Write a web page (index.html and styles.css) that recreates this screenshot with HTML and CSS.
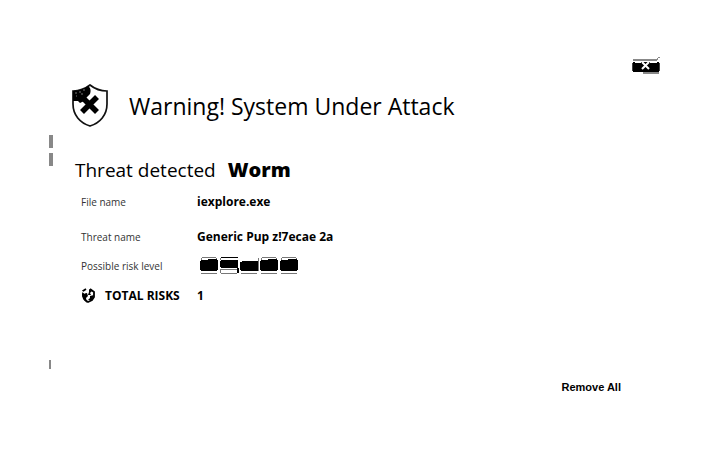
FILE: index.html
```html
<!DOCTYPE html>
<html lang="en">
<head>
<meta charset="utf-8">
<meta name="viewport" content="width=device-width, initial-scale=1">
<title>Warning! System Under Attack</title>
<link rel="stylesheet" href="styles.css">
</head>
<body>
<main class="alert">
  <div class="rail" aria-hidden="true">
    <span class="tick"></span>
    <span class="tick"></span>
    <span class="tick tick-thin"></span>
  </div>
  <div class="content">
    <div class="titlebar">
      <button class="close" type="button" aria-label="Close">
        <svg width="28" height="20" viewBox="0 0 28 20" aria-hidden="true" shape-rendering="crispEdges">
          <path d="M1 3H25V5H1zM25 2H26V4H25zM26 1H28V2H26zM11 16H27V18H11z" fill="#888"/>
          <path d="M1 6H27V16H1z" fill="#000"/>
          <path d="M0 7H1V15H0zM27 7H28V15H27z" fill="#444"/>
          <path d="M3 6H9V7H3zM18 6H25V7H18z" fill="#fff"/>
          <path d="M10 6L17 13M17 6L10 13" stroke="#fff" stroke-width="2" shape-rendering="auto"/>
        </svg>
      </button>
    </div>
    <header class="heading">
      <svg class="shield" width="38" height="46" viewBox="0 0 38 46" aria-hidden="true">
        <path d="M19 2C14 6 8 8 2 8V21C2 32 9 40 19 43C29 40 36 32 36 21V8C30 8 24 6 19 2Z" fill="#fff" stroke="#111" stroke-width="1.7"/>
        <path d="M2 8C8 8 13 6 17 3C20 5 20 8 19 11L16 14L14 16L13 18L9 20L7 18H2Z" fill="#000"/>
        <path d="M11 14L26 29M26 14L11 29" stroke="#000" stroke-width="5.6"/>
        <path d="M4 10H6M8 9H10M12 7H14M10 11H12M5 13H6" stroke="#777" stroke-width="1"/>
      </svg>
      <h1 class="title">Warning! System Under Attack</h1>
    </header>
    <h2 class="threat">Threat detected <strong class="kind">Worm</strong></h2>
    <dl class="details">
      <dt>File name</dt>
      <dd>iexplore.exe</dd>
      <dt>Threat name</dt>
      <dd>Generic Pup z!7ecae 2a</dd>
      <dt>Possible risk level</dt>
      <dd>
        <svg class="level" width="100" height="20" viewBox="0 0 100 20" role="img" aria-label="5 of 5" shape-rendering="crispEdges">
          <defs>
            <g id="block">
              <path d="M2 1H16V2H2zM1 2H2V4H1zM16 2H17V4H16zM1 17H17V18H1z" fill="#777"/>
              <path d="M1 4H8V3H17V4H18V14H17V15H1V14H0V5H1z" fill="#000"/>
            </g>
          </defs>
          <use href="#block"/>
          <path d="M21 1H38V2H21zM21 4H38V12H21zM20 5H21V11H20zM37 12H39V17H37z" fill="#000"/>
          <path d="M20 2H21V4H20zM20 13H37V14H20zM20 14H21V17H20zM21 17H37V18H21z" fill="#777"/>
          <path d="M40 6H42V5H58V15H41V14H40z" fill="#000"/>
          <path d="M58 2H59V15H58zM41 17H57V18H41z" fill="#777"/>
          <use href="#block" x="60"/>
          <use href="#block" x="80"/>
        </svg>
      </dd>
      <dt class="total">
        <svg width="14" height="16" viewBox="0 0 14 16" aria-hidden="true">
          <path d="M5 1L2 3V8L4 12L7 14L11 12L13 9V4L9 1" fill="none" stroke="#000" stroke-width="1.8"/>
          <path d="M1 6L6 5L7 8L5 10L6 15L2 11ZM8 1L11 3L9 5L10 7L7 7L8 4ZM13 7L9 8L9 10L7 12L11 12Z" fill="#000"/>
          <path d="M0 3L4 5" stroke="#fff" stroke-width="1.2"/>
        </svg>
        <span>TOTAL RISKS</span>
      </dt>
      <dd>1</dd>
    </dl>
    <footer class="actions">
      <button class="remove" type="button">Remove All</button>
    </footer>
  </div>
</main>
</body>
</html>
```
FILE: styles.css
```css
* {
  box-sizing: border-box;
}

body {
  margin: 0;
  background: #fff;
  color: #000;
  font-family: "Open Sans", "Noto Sans", sans-serif;
}

button {
  padding: 0;
  border: 0;
  background: none;
  color: inherit;
  font: inherit;
  cursor: pointer;
}

svg {
  display: block;
}

.alert {
  display: flex;
  gap: 18px;
  min-height: 100vh;
  padding: 56px 51px 64px 49px;
}

.rail {
  display: flex;
  flex-direction: column;
  gap: 5px;
  width: 4px;
  padding: 79px 0 32px;
}

.tick {
  width: 4px;
  height: 13px;
  background: #888;
}

.tick-thin {
  width: 2px;
  height: 9px;
  margin-top: auto;
}

.content {
  display: flex;
  flex: 1;
  flex-direction: column;
}

.titlebar {
  display: flex;
  justify-content: flex-end;
}

.heading {
  display: flex;
  align-items: center;
  gap: 20px;
  margin-top: 7px;
}

.shield {
  flex: none;
}

.title {
  margin: 0;
  font-size: 23px;
  font-weight: 400;
  line-height: 46px;
}

.threat {
  display: flex;
  align-items: baseline;
  gap: 12px;
  margin: 27px 0 0 4px;
  font-size: 19px;
  font-weight: 400;
  line-height: 28px;
}

.kind {
  font-size: 20px;
  font-weight: 800;
}

.details {
  display: grid;
  grid-template-columns: 116px 1fr;
  grid-template-rows: 36px 34px 24px 36px;
  align-items: center;
  margin: 0 0 0 10px;
  font-size: 12px;
  line-height: 16px;
}

.details dt {
  color: #333;
  font-size: 10px;
}

.details dd {
  margin: 0;
  font-weight: 700;
}

.level {
  margin-left: 3px;
}

.details .total {
  display: flex;
  align-items: center;
  gap: 10px;
  color: #000;
  font-size: 12px;
  font-weight: 700;
}

.actions {
  display: flex;
  justify-content: flex-end;
  margin-top: auto;
  padding-right: 39px;
}

.remove {
  font-family: "Liberation Sans", sans-serif;
  font-size: 11px;
  font-weight: 700;
  line-height: 28px;
}
```
